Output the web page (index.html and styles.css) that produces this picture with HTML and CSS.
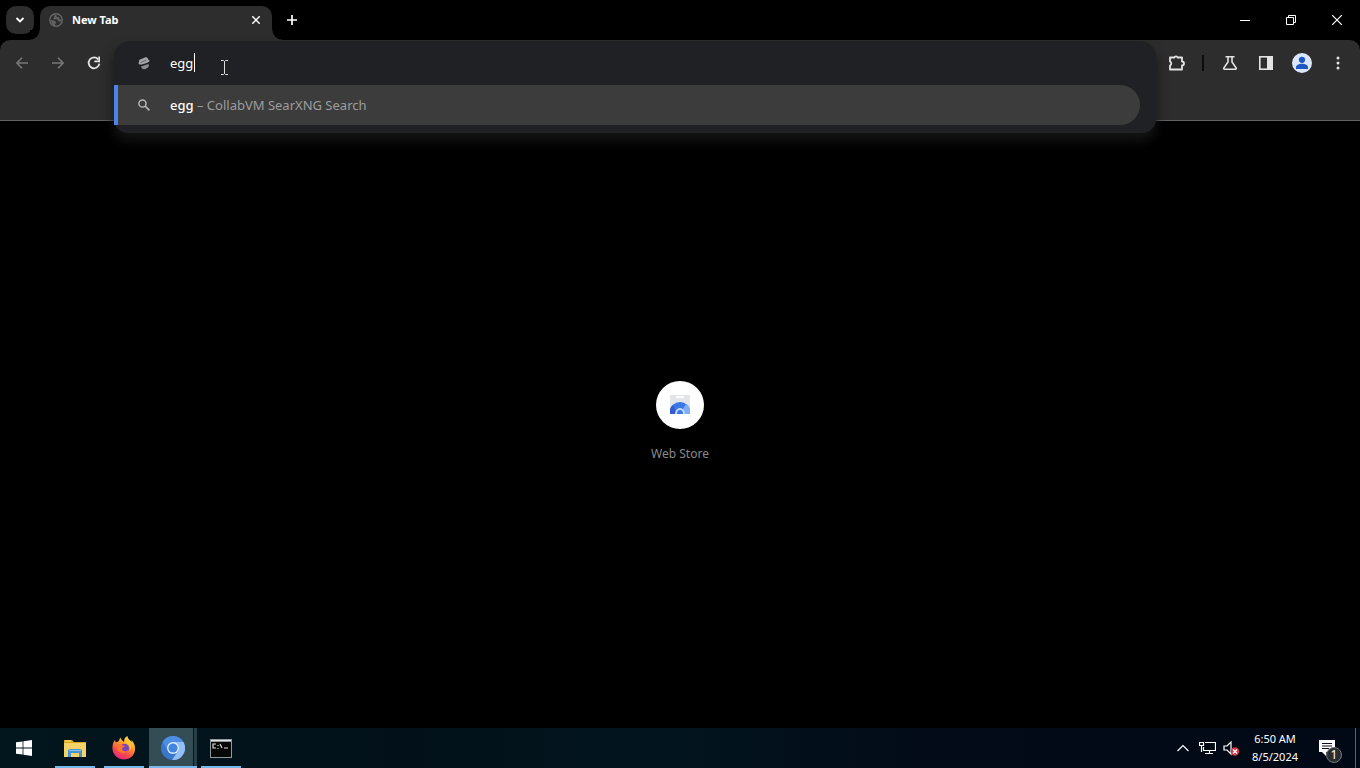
FILE: index.html
```html
<!DOCTYPE html>
<html lang="en">
<head>
<meta charset="utf-8">
<title>New Tab</title>
<link rel="stylesheet" href="styles.css">
</head>
<body>
<header class="tabstrip">
  <button class="tab-search" aria-label="Search tabs"><svg width="10" height="10" viewBox="0 0 10 10"><path d="M1.500 3 5 6.500 8.500 3" fill="none" stroke="currentColor" stroke-width="1.800"/></svg></button>
  <div class="tab">
    <svg class="tab-icon" width="14" height="14" viewBox="0 0 14 14"><circle cx="7" cy="7" r="6.200" fill="none" stroke="#666" stroke-width="1.400"/><path d="M1.500 7.500 4 7l2 1 1.500 1.500L6 11v2L4 12zM7 1.500 5 3v2L3.500 6 5.500 6.500 8 6l1.500 2.500H12L13 7l-2.500-1L10 4H8z" fill="#606060"/></svg>
    <span class="tab-title">New Tab</span>
    <button class="tab-close" aria-label="Close tab"><svg width="8" height="8" viewBox="0 0 8 8"><path d="m.3.3 7.400 7.400M7.700.3.3 7.700" stroke="currentColor" stroke-width="1.500"/></svg></button>
  </div>
  <button class="new-tab" aria-label="New tab"><svg width="12" height="12" viewBox="0 0 12 12"><path d="M6 1v10M1 6h10" stroke="currentColor" stroke-width="1.700"/></svg></button>
  <div class="window-buttons">
    <button aria-label="Minimize"><svg width="10" height="10" viewBox="0 0 10 10"><path d="M0 5.500h10" stroke="currentColor"/></svg></button>
    <button aria-label="Restore"><svg width="10" height="10" viewBox="0 0 10 10"><path d="M.5 2.500h7v7h-7zM2.500 2.500v-2h7v7h-2" fill="none" stroke="currentColor"/></svg></button>
    <button aria-label="Close"><svg width="10" height="10" viewBox="0 0 10 10"><path d="m0 0 10 10M10 0 0 10" stroke="currentColor" stroke-width="1.200"/></svg></button>
  </div>
</header>

<nav class="toolbar">
  <div class="toolbar-row">
    <button class="tool dim" aria-label="Back"><svg width="12" height="12" viewBox="0 0 12 12"><path d="M6 .7.9 6 6 11.300M1 6h11" fill="none" stroke="currentColor" stroke-width="1.600"/></svg></button>
    <button class="tool dim" aria-label="Forward"><svg width="12" height="12" viewBox="0 0 12 12"><path d="M6 .7 11.100 6 6 11.300M11 6H0" fill="none" stroke="currentColor" stroke-width="1.600"/></svg></button>
    <button class="tool" aria-label="Reload"><svg width="14" height="14" viewBox="0 0 14 14"><path d="M11.300 3.500A5.400 5.400 0 1 0 12.400 7.700" fill="none" stroke="currentColor" stroke-width="1.800"/><path d="M13 .5v5.700H7.300V4.600h4V.5z" fill="currentColor"/></svg></button>
    <div class="omnibox">
      <div class="omnibox-popup">
        <label class="address">
          <svg class="row-icon" width="12" height="14" viewBox="0 0 12 14"><path d="M1 5.500C.5 3.500 3 3.200 4.500 2.500S7.500.5 9 1.500s.5 2 2 2.500c1.500 1-.5 2.500-2.500 3S3 9 1.500 8.500.8 6.500 1 5.500z" fill="#a5a6a9"/><path d="M3 10.500 10.500 8c1 1.500 0 3.500-2 4.500-2.500 1.500-5 .5-5.500-2z" fill="#8c8d90"/><path d="m2.500 6.500 6-2.500" stroke="#656669"/></svg>
          <span class="field"><input type="text" value="egg" aria-label="Search or type a URL"><i class="caret"></i></span>
        </label>
        <a class="suggestion" href="#">
          <svg class="row-icon" width="12" height="12" viewBox="0 0 12 12"><circle cx="4.500" cy="4.500" r="3.600" fill="none" stroke="#b5b5b5" stroke-width="1.500"/><path d="m7.200 7.200 4.200 4.200" stroke="#b5b5b5" stroke-width="1.700"/></svg>
          <span class="suggestion-text"><b>egg</b> – CollabVM SearXNG Search</span>
        </a>
      </div>
    </div>
    <button class="tool" aria-label="Extensions"><svg width="18" height="18" viewBox="0 0 18 18"><path d="M3 3.500h4.200a2 2 0 0 1 3.600 0H15v4a2 2 0 0 1 0 4v4H3v-4a2.200 2.200 0 0 0 0-4z" fill="none" stroke="currentColor" stroke-width="1.800" stroke-linejoin="round"/></svg></button>
    <span class="divider"></span>
    <button class="tool" aria-label="Experiments"><svg width="16" height="16" viewBox="0 0 16 16"><path d="M3.500 1.800h9M6 2v5L1.800 13q-.4 1.200.8 1.200h10.800q1.200 0 .8-1.200L10 7V2" fill="none" stroke="currentColor" stroke-width="1.600"/></svg></button>
    <button class="tool" aria-label="Side panel"><svg width="14" height="14" viewBox="0 0 14 14"><rect x=".8" y=".8" width="12.400" height="12.400" fill="none" stroke="currentColor" stroke-width="1.600"/><path d="M8 0h6v14H8z" fill="currentColor"/></svg></button>
    <button class="tool" aria-label="Profile"><svg width="20" height="20" viewBox="0 0 20 20"><circle cx="10" cy="10" r="10" fill="#dce6fb"/><circle cx="10" cy="6.800" r="3.100" fill="#1d57c4"/><path d="M4 14.500c0-5 12-5 12 0V16H4z" fill="#1d57c4"/></svg></button>
    <button class="tool" aria-label="Menu"><svg width="4" height="16" viewBox="0 0 4 16"><g fill="currentColor"><circle cx="2" cy="3" r="1.500"/><circle cx="2" cy="8" r="1.500"/><circle cx="2" cy="13" r="1.500"/></g></svg></button>
  </div>
</nav>

<main class="page">
  <a class="shortcut" href="#">
    <span class="shortcut-icon"><svg width="22" height="22" viewBox="0 0 22 22"><path d="M1 1h20v19H1z" fill="#e4e5e8"/><path d="M7 2h8v2H7z" fill="#fff"/><path d="M1 20V17a10 9 0 0 1 20 0v3z" fill="#3b78e7"/><path d="M1 20v-3q0-4 3-6l4 9z" fill="#345bd0"/><path d="M21 20v-3q0-5-4-7l-3 5 2 5z" fill="#80adf4"/><path d="M6 20a5 6 0 0 1 10 0z" fill="#c5dcff"/><path d="M8 20a3 4 0 0 1 6 0z" fill="#3977e8"/></svg></span>
    <span>Web Store</span>
  </a>
</main>

<footer class="taskbar">
  <button class="start" aria-label="Start"><svg width="16" height="16" viewBox="0 0 16 16"><path d="M0 2.300 6.600 1.400V7.600H0zM7.400 1.300 16 0v7.600H7.400zM0 8.400h6.600v6.200L0 13.700zM7.400 8.400H16V16l-8.600-1.200z" fill="#fff"/></svg></button>
  <button class="app" aria-label="File Explorer"><svg width="22" height="19" viewBox="0 0 22 19"><path d="M0 1h8l2 2h12v15H0z" fill="#d9a520"/><path d="M0 4h22v14H0z" fill="#f3d267"/><path d="M1 1h6v2H1z" fill="#f6c944"/><path d="M4 18v-7l2-1h10l2 1v7h-3v-4H7v4z" fill="#4593cf"/><path d="M5 11h12v1H5z" fill="#8ac6ee"/></svg></button>
  <button class="app" aria-label="Firefox"><svg width="24" height="24" viewBox="0 0 24 24"><defs><linearGradient id="fox" x1=".8" y1="0" x2=".3" y2="1"><stop offset="0" stop-color="#ffed45"/><stop offset=".4" stop-color="#ff9b28"/><stop offset=".72" stop-color="#fa474b"/><stop offset="1" stop-color="#e52785"/></linearGradient></defs><path d="M3 4q.3 2 1 2.500L7 5q0-2 1.500-3.500C9 4 11 5 12 6c0-3 1-5 3.500-6 0 3 3 4 4 6V4c3 3 4 7 3.500 10-1 6-5 9.500-11 9.500S1 19 .5 13C.3 9 1 6 3 4z" fill="url(#fox)"/><circle cx="12.500" cy="12.500" r="4.700" fill="#7944bd"/><path d="M4 9c3-2 5-1 7 .5l2 .5c-1 2-3 1-3 2.500 0 3 4 4 7 1-1 5-11 5-12-1z" fill="#ff752f"/><path d="M13 7c4 0 6 4 4 8 3-2 3-8-1-11z" fill="#ffc638"/></svg></button>
  <button class="app active" aria-label="Chromium"><svg width="24" height="24" viewBox="0 0 24 24"><circle cx="12" cy="12" r="12" fill="#3977cd"/><path d="M12 6h10.400A12 12 0 0 1 11 24l6-9z" fill="#91bff6"/><path d="M1.600 6A12 12 0 0 1 22.400 6H12l-6 7z" fill="#4d8de3"/><circle cx="12" cy="12" r="6" fill="#e0edff"/><circle cx="12" cy="12" r="4.600" fill="#4384df"/></svg></button>
  <button class="app" aria-label="Command Prompt"><svg width="22" height="19" viewBox="0 0 22 19"><path d="M0 0h22v19H0z" fill="#8f999d"/><path d="M1 3h20v15H1z" fill="#080808"/><path d="M1 1h20v1H1z" fill="#e0e5e7"/><path d="M6 5H3v4h3M8 6v1M8 9v1M10 5l2 4M14 9h4" fill="none" stroke="#ddd" stroke-width="1.200"/></svg></button>
  <div class="tray">
    <button class="tray-button" aria-label="Show hidden icons"><svg width="12" height="8" viewBox="0 0 12 8"><path d="m.5 7 5.500-5.500L11.500 7" fill="none" stroke="currentColor" stroke-width="1.200"/></svg></button>
    <button class="tray-button" aria-label="Network"><svg width="17" height="14" viewBox="0 0 17 14"><path d="M6 1.500h10.500v8H4.500V6M10.500 9.500v3M6 12.500h8M.5 1.500h4v3h-4zM2.500 5v6" fill="none" stroke="currentColor" stroke-width="1.200"/></svg></button>
    <button class="tray-button" aria-label="Volume muted"><svg width="17" height="15" viewBox="0 0 17 15"><path d="M1 5h3l4-4v12L4 9H1z" fill="none" stroke="currentColor" stroke-width="1.200"/><circle cx="12" cy="10.500" r="4.200" fill="#d83846"/><path d="m10 8.500 4 4m0-4-4 4" stroke="#fff" stroke-width="1.400"/></svg></button>
    <div class="clock"><time>6:50 AM</time><time>8/5/2024</time></div>
    <button class="notifications" aria-label="Notifications"><svg width="16" height="17" viewBox="0 0 16 17"><path d="M0 0h16v12H7v4l-4-4H0z" fill="#fff"/><path d="M3 3.500h10M3 6h10M3 8.500h7" stroke="#07101c"/></svg><span class="badge">1</span></button>
    <button class="show-desktop" aria-label="Show desktop"></button>
  </div>
</footer>

<svg class="pointer" width="9" height="17" viewBox="0 0 9 17"><path d="M1 1.500h2.500l1 1 1-1H8M4.500 2v13M1 15.500h2.500l1-1 1 1H8" fill="none" stroke="#ddd"/></svg>
</body>
</html>
```
FILE: styles.css
```css
* { box-sizing: border-box; }
body {
  margin: 0;
  min-height: 100vh;
  display: flex;
  flex-direction: column;
  background: #000;
  color: #fff;
  font: 12px/18px "Noto Sans", "Open Sans", sans-serif;
}
button {
  display: flex;
  align-items: center;
  justify-content: center;
  padding: 0;
  border: 0;
  background: none;
  color: inherit;
  font: inherit;
}
a { color: inherit; text-decoration: none; }
svg { display: block; flex: none; }

.tabstrip { display: flex; height: 40px; padding-left: 6px; }
.tab-search {
  width: 28px;
  height: 28px;
  margin-top: 6px;
  border-radius: 10px;
  background: #2d2d2d;
}
.tab {
  position: relative;
  display: flex;
  align-items: center;
  gap: 9px;
  width: 232px;
  height: 34px;
  margin: 6px 0 0 6px;
  padding: 0 8px 6px 9px;
  border-radius: 10px 10px 0 0;
  background: #2d2d2d;
}
.tab::before, .tab::after {
  content: "";
  position: absolute;
  bottom: 0;
  width: 10px;
  height: 10px;
}
.tab::before { right: 100%; background: radial-gradient(circle at 0 0, #000 9px, #2d2d2d 10px); }
.tab::after { left: 100%; background: radial-gradient(circle at 100% 0, #000 9px, #2d2d2d 10px); }
.tab-title { flex: 1; font-size: 11px; font-weight: 700; }
.tab-close { width: 16px; height: 16px; }
.new-tab { width: 28px; height: 28px; margin: 6px 0 0 6px; }
.window-buttons { display: flex; margin-left: auto; }
.window-buttons button { width: 46px; height: 40px; }

.toolbar {
  height: 81px;
  border-bottom: 1px solid #626262;
  border-radius: 10px 10px 0 0;
  background: #2d2d2d;
}
.toolbar-row { display: flex; align-items: center; height: 46px; padding: 0 4px; }
.tool { width: 36px; height: 36px; color: #e3e3e3; }
.dim { color: #777; }
.divider { width: 2px; height: 16px; margin: 0 8px; background: #0c0c0c; }
.omnibox { position: relative; flex: 1; align-self: stretch; margin: 0 2px; }
.omnibox-popup {
  position: absolute;
  top: 1px;
  left: 0;
  right: 0;
  padding-bottom: 8px;
  border-radius: 16px 16px 14px 14px;
  background: #202124;
  box-shadow: 0 8px 12px #141414;
  font-size: 13px;
}
.address, .suggestion { display: flex; align-items: center; }
.address { height: 44px; padding-left: 24px; gap: 20px; }
.row-icon { width: 12px; }
.field { position: relative; flex: 1; }
.field input {
  display: block;
  width: 100%;
  height: 24px;
  padding: 0;
  border: 0;
  outline: 0;
  background: none;
  color: #fff;
  font: inherit;
}
.caret { position: absolute; top: 2px; left: 24px; width: 1px; height: 19px; background: #fff; }
.suggestion {
  height: 40px;
  margin-right: 16px;
  padding-left: 20px;
  gap: 20px;
  border-left: 4px solid #4b83eb;
  border-radius: 0 20px 20px 0;
  background: #3c3c3c;
  color: #9c9c9c;
}
.suggestion b { color: #fff; font-weight: 500; }

.page { flex: 1; display: flex; align-items: center; justify-content: center; }
.shortcut {
  display: flex;
  flex-direction: column;
  align-items: center;
  gap: 16px;
  padding-bottom: 5px;
  color: #878b8e;
}
.shortcut-icon {
  display: grid;
  place-items: center;
  width: 48px;
  height: 48px;
  border-radius: 50%;
  background: #fff;
}

.taskbar {
  display: flex;
  height: 40px;
  background: linear-gradient(90deg, #02161e, #021119 30%, #02151f 48%, #020b17 68%, #020916);
}
.start { width: 48px; }
.app { position: relative; width: 48px; margin-left: 1px; }
.app:nth-of-type(2) { margin-left: 3px; }
.active + .app { margin-left: 0; }
.app::after {
  content: "";
  position: absolute;
  left: 4px;
  right: 4px;
  bottom: 0;
  height: 2px;
  background: #76b9ed;
}
.active { background: linear-gradient(90deg, #344c53 44px, #06161e 44px, #06161e 45px, #263e46 45px); }
.active::after { left: 0; right: 0; }
.tray { display: flex; margin-left: auto; }
.tray-button { width: 24px; }
.clock {
  display: flex;
  flex-direction: column;
  justify-content: center;
  align-items: center;
  width: 64px;
  font-size: 11px;
}
.notifications { position: relative; width: 40px; margin-right: 8px; }
.badge {
  position: absolute;
  right: 5px;
  bottom: 5px;
  width: 16px;
  height: 16px;
  border: 1px solid #777;
  border-radius: 50%;
  background: #292d33;
  line-height: 14px;
}
.show-desktop { width: 5px; border-left: 1px solid #59626c; }
.pointer { position: absolute; left: 220px; top: 59px; }
```
